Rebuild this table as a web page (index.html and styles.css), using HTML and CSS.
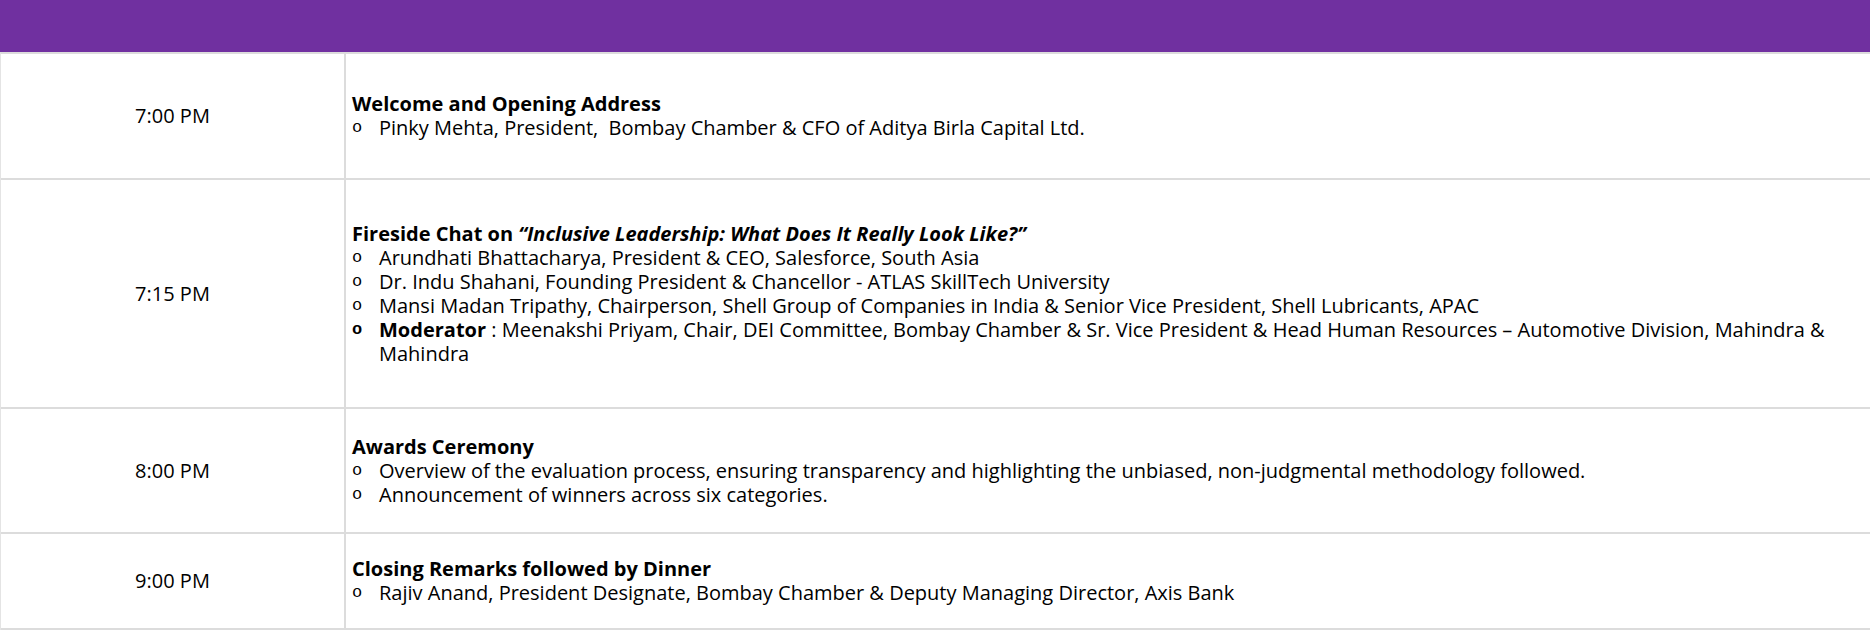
FILE: index.html
```html
<!DOCTYPE html>
<html lang="en">
<head>
<meta charset="utf-8">
<title>Agenda</title>
<link rel="stylesheet" href="styles.css">
</head>
<body>
<div class="topbar"></div>
<div class="schedule">
  <div class="row row-1">
    <div class="time">7:00 PM</div>
    <div class="detail">
      <div class="title">Welcome and Opening Address</div>
      <ul class="items">
        <li><span class="marker">o</span><span class="text">Pinky Mehta, President,&nbsp; Bombay Chamber &amp; CFO of Aditya Birla Capital Ltd.</span></li>
      </ul>
    </div>
  </div>
  <div class="row row-2">
    <div class="time">7:15 PM</div>
    <div class="detail">
      <div class="title">Fireside Chat on <em>“Inclusive Leadership: What Does It Really Look Like?”</em></div>
      <ul class="items">
        <li><span class="marker">o</span><span class="text">Arundhati Bhattacharya, President &amp; CEO, Salesforce, South Asia</span></li>
        <li><span class="marker">o</span><span class="text">Dr. Indu Shahani, Founding President &amp; Chancellor - ATLAS SkillTech University</span></li>
        <li><span class="marker">o</span><span class="text">Mansi Madan Tripathy, Chairperson, Shell Group of Companies in India &amp; Senior Vice President, Shell Lubricants, APAC</span></li>
        <li><span class="marker marker-bold">o</span><span class="text"><b>Moderator</b> : Meenakshi Priyam, Chair, DEI Committee, Bombay Chamber &amp; Sr. Vice President &amp; Head Human Resources – Automotive Division, Mahindra &amp; Mahindra</span></li>
      </ul>
    </div>
  </div>
  <div class="row row-3">
    <div class="time">8:00 PM</div>
    <div class="detail">
      <div class="title">Awards Ceremony</div>
      <ul class="items">
        <li><span class="marker">o</span><span class="text">Overview of the evaluation process, ensuring transparency and highlighting the unbiased, non-judgmental methodology followed.</span></li>
        <li><span class="marker">o</span><span class="text">Announcement of winners across six categories.</span></li>
      </ul>
    </div>
  </div>
  <div class="row row-4">
    <div class="time">9:00 PM</div>
    <div class="detail">
      <div class="title">Closing Remarks followed by Dinner</div>
      <ul class="items">
        <li><span class="marker">o</span><span class="text">Rajiv Anand, President Designate, Bombay Chamber &amp; Deputy Managing Director, Axis Bank</span></li>
      </ul>
    </div>
  </div>
</div>
</body>
</html>
```
FILE: styles.css
```css
html, body {
  margin: 0;
  padding: 0;
  background: #ffffff;
}
body {
  font-family: "Open Sans", "Liberation Sans", sans-serif;
  font-size: 20px;
  line-height: 24px;
  color: #000000;
}
.topbar {
  height: 52px;
  background: #7030a0;
}
.schedule {
  border-top: 2px solid #dcdcdc;
  border-left: 1px solid #e4e4e4;
}
.row {
  display: grid;
  grid-template-columns: 345px 1fr;
  border-bottom: 2px solid #dcdcdc;
}
.row-1 { height: 124px; }
.row-2 { height: 227px; }
.row-3 { height: 123px; }
.row-4 { height: 94px; }
.time {
  display: flex;
  align-items: center;
  justify-content: center;
  border-right: 2px solid #dcdcdc;
}
.detail {
  display: flex;
  flex-direction: column;
  justify-content: center;
  padding: 0 6px;
}
.title {
  font-weight: 700;
}
.title em {
  font-style: italic;
}
.items {
  list-style: none;
  margin: 0;
  padding: 0;
}
.items li {
  display: grid;
  grid-template-columns: 27px 1fr;
}
.marker {
  font-family: "Liberation Mono", monospace;
  font-size: 17px;
}
.marker-bold {
  font-weight: 700;
}
```
